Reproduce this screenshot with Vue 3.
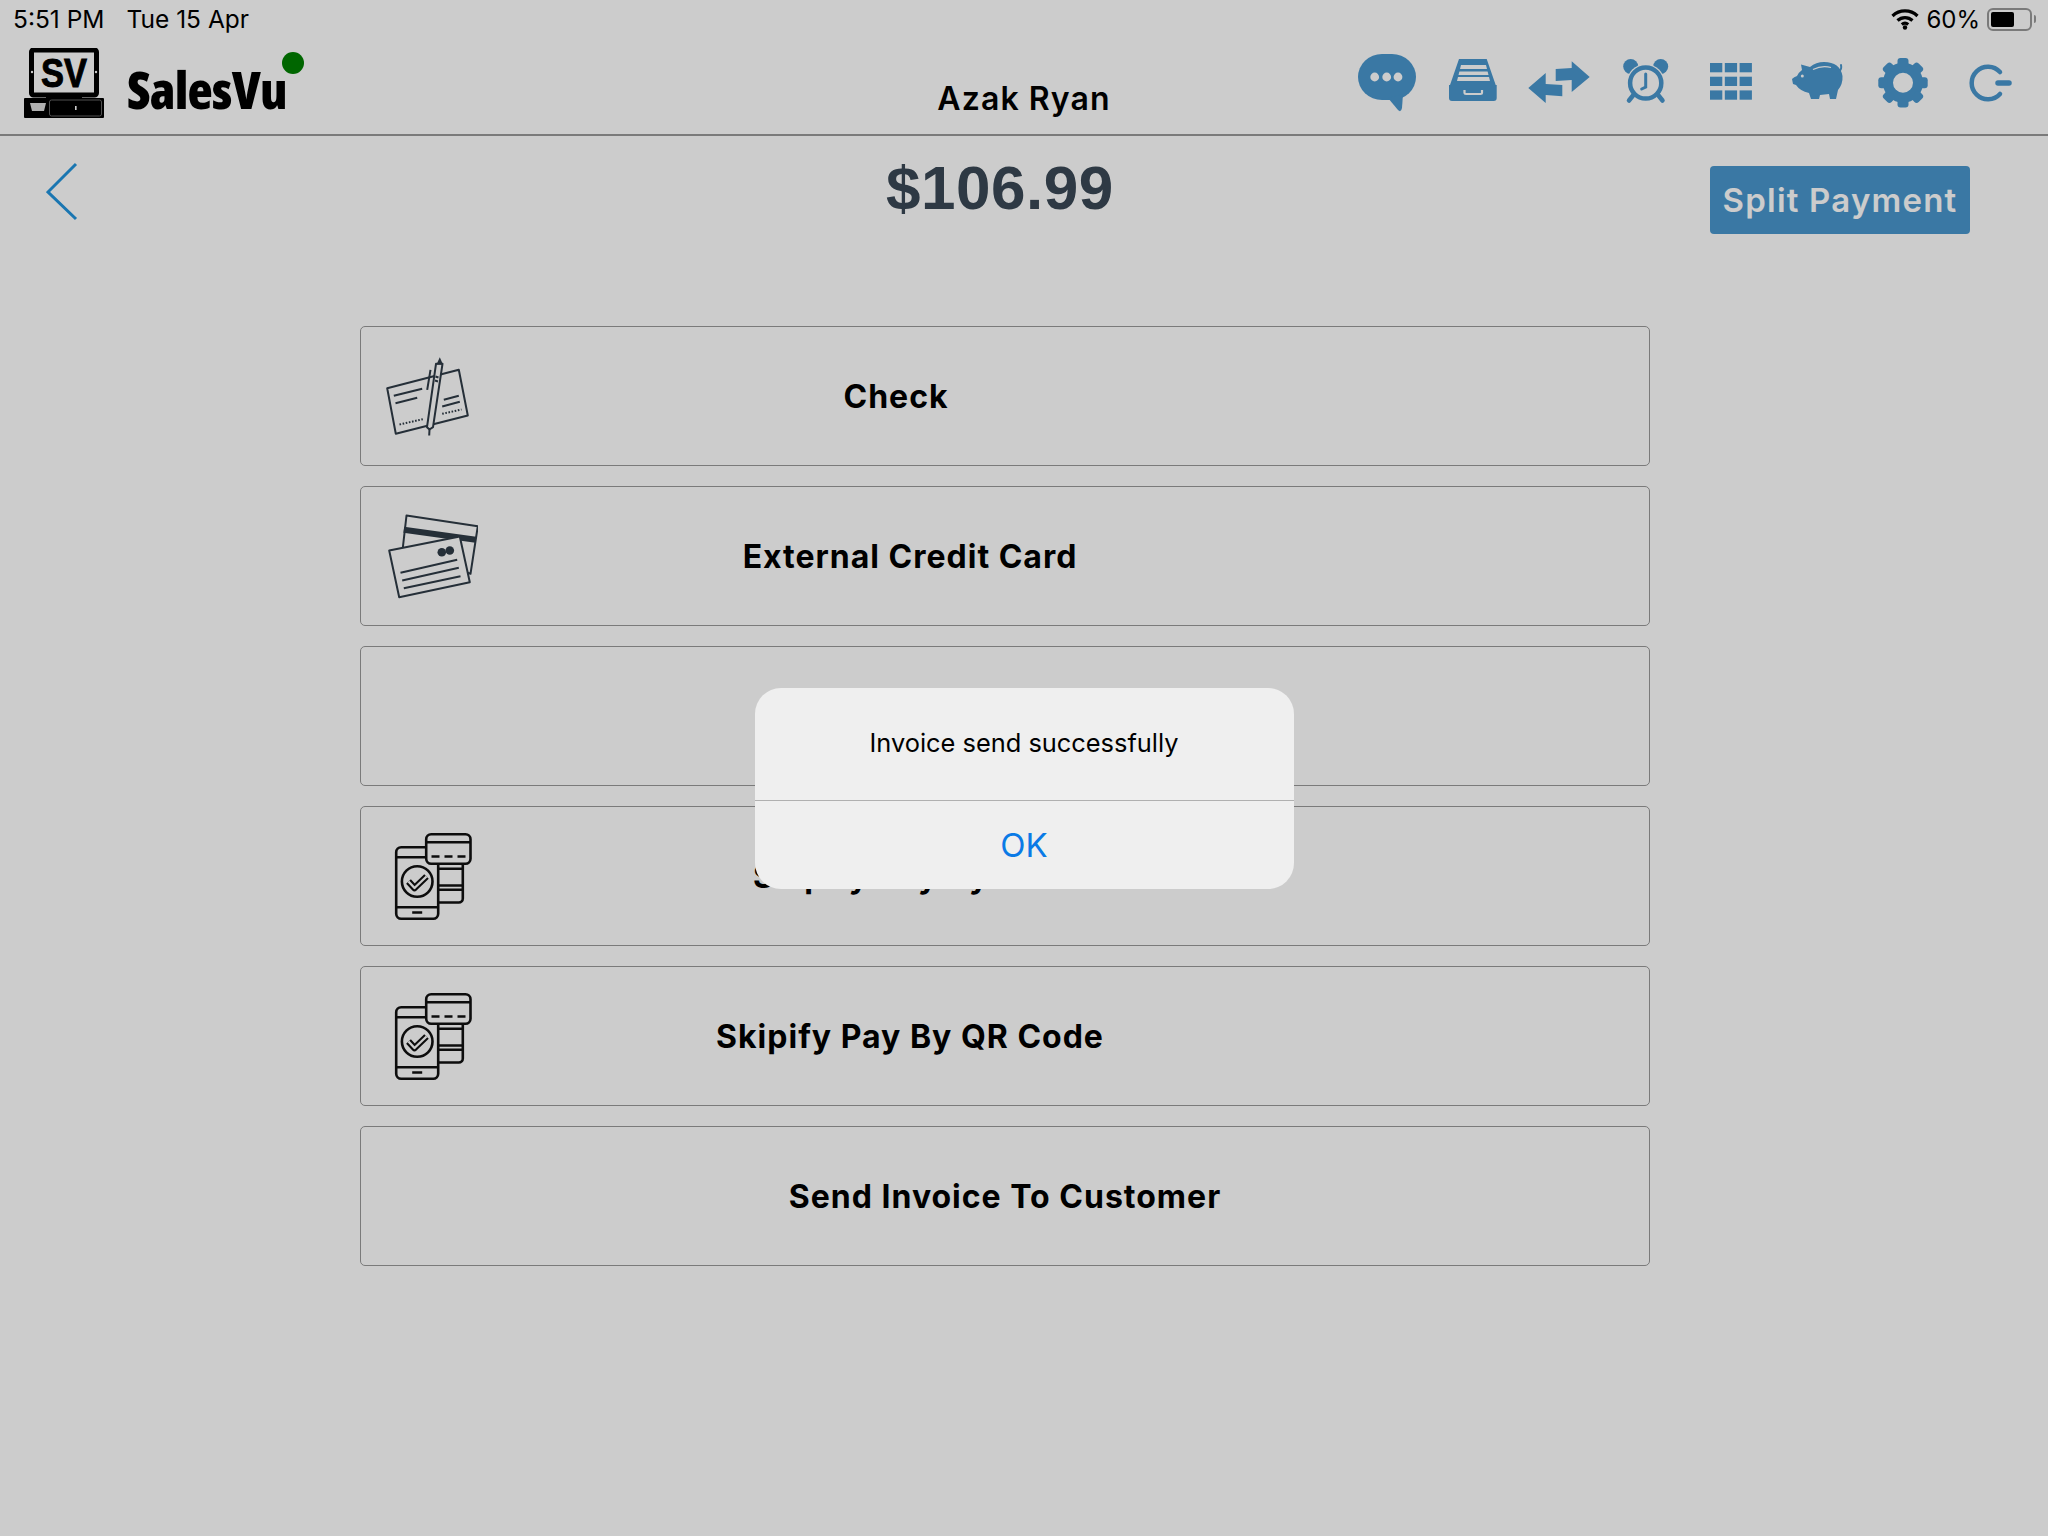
<template>
  <div class="page">
    <div class="status-bar">
      <span class="time">5:51 PM</span>
      <span class="date">Tue 15 Apr</span>
      <span class="status-right">
        <svg class="wifi" viewBox="0 0 28 22">
          <path d="M1.5 8 A18 18 0 0 1 26.5 8" />
          <path d="M6.5 12.5 A11 11 0 0 1 21.5 12.5" />
          <path d="M10.8 16.5 A5 5 0 0 1 17.2 16.5" />
          <circle cx="14" cy="19.5" r="2.2" class="wifi-dot" />
        </svg>
        <span class="percent">60%</span>
        <span class="battery"><span class="battery-fill"></span></span>
        <span class="battery-nub"></span>
      </span>
    </div>

    <header class="nav">
      <div class="brand">
        <svg class="logo" viewBox="0 0 80 70">
          <rect x="7.5" y="2" width="65" height="45" rx="2" class="logo-screen" />
          <circle cx="8" cy="24" r="1.2" class="logo-dot" />
          <circle cx="72" cy="24" r="1.2" class="logo-dot" />
          <text x="40" y="39" text-anchor="middle" textLength="46" lengthAdjust="spacingAndGlyphs" class="logo-text">SV</text>
          <rect x="22" y="47" width="36" height="3" />
          <rect x="0" y="50" width="80" height="20" rx="1" />
          <path d="M6 55 H22 L20 63 H8 Z" class="logo-receipt" />
          <rect x="25.5" y="52" width="52" height="16" rx="2" class="logo-drawer" />
          <rect x="51" y="58" width="1.6" height="4" class="logo-dot" />
        </svg>
        <span class="brand-name">SalesVu</span>
        <span class="online-dot"></span>
      </div>
      <div class="user-name">Azak Ryan</div>
      <div class="nav-icons">
        <svg viewBox="0 0 86 70">
          <rect x="14" y="6" width="58" height="46" rx="24" ry="23" />
          <path d="M44 50 L54 62 Q57 65 58 60 L59 46 Z" />
          <circle cx="30.7" cy="29" r="4.4" class="cut" />
          <circle cx="42.7" cy="29" r="4.4" class="cut" />
          <circle cx="54" cy="29" r="4.4" class="cut" />
        </svg>
        <svg viewBox="0 0 86 70">
          <path d="M29 11 H56.7 L65.7 37 H66.7 V50 Q66.7 53 63.7 53 H22 Q19 53 19 50 V37 H20 Z" />
          <path d="M31 17 H56 L60 33 H27 Z" class="cut" />
          <rect x="29" y="21" width="29" height="2.5" />
          <rect x="28" y="27" width="31" height="2" />
          <path d="M34.5 42 V45 Q34.5 46 36 46 H50.5 Q52 46 52 45 V42" class="cut-line" />
        </svg>
        <svg viewBox="0 0 86 70">
          <path d="M73.7 29 L55.7 13.3 V20 L39.7 21 V33 L55.7 32 V44 Z" />
          <path d="M12.3 40 L29.7 25 V36 L46.3 37 V48.3 L29.7 47 V55 Z" />
        </svg>
        <svg viewBox="0 0 86 70">
          <circle cx="28.7" cy="18.5" r="7.5" />
          <circle cx="58.7" cy="18.5" r="7.5" />
          <circle cx="43.7" cy="35" r="19" class="cut" />
          <circle cx="43.7" cy="35" r="15.6" class="line" />
          <path d="M43.7 26 V39 L39.7 41" class="thin" />
          <path d="M31 47.5 L27 52.5 M56.5 47.5 L60.5 52.5" class="line" />
        </svg>
        <svg viewBox="0 0 86 70">
          <rect v-for="c in gridCells" :key="c.key" :x="c.x" :y="c.y" width="12.3" height="9.3" />
        </svg>
        <svg viewBox="0 0 86 70">
          <path d="M18 31 Q20 29 23 28 Q24 25 28 22 L27 16.5 L36 19 Q42 14 50 14 Q66 14 68.5 28 Q69 36 64 42 L62 51 L56 51 L55 46 L46 47 L45 51 L37 51 L35 45 Q26 43 22 37 L19 36 Z" />
          <path d="M65 23 Q68 22 67 17" class="thin-s" />
          <circle cx="28.3" cy="28" r="1.5" class="cut" />
          <path d="M39 21.5 Q48 17 57 19.5" class="cut-slot" />
        </svg>
        <svg viewBox="0 0 86 70">
          <circle cx="43" cy="34.7" r="15" class="gear-ring" />
          <rect
            v-for="a in gearTeeth"
            :key="a"
            x="37.5"
            y="10"
            width="11"
            height="9"
            rx="3"
            :transform="`rotate(${a} 43 34.7)`"
          />
        </svg>
        <svg viewBox="0 0 86 70">
          <path d="M54 24 A16.3 16.3 0 1 0 54 46" class="line" />
          <path d="M52 35 H63" class="bar" />
        </svg>
      </div>
    </header>

    <section class="total-row">
      <svg class="back" viewBox="0 0 32 60">
        <path d="M30 2 L2 30 L30 57" />
      </svg>
      <div class="amount">$106.99</div>
      <button type="button" class="split-btn">Split Payment</button>
    </section>

    <div class="methods">
      <div class="method">
        <svg class="method-icon check-icon" viewBox="0.5 1.5 117 137">
          <path d="M26.7 61.7 L98.3 43.3 L107.3 89 L35.3 107.3 Z" />
          <path d="M33.3 69.3 L61.7 62.3 M35 76.7 L56.7 71.3 M83.3 73.3 L98.3 69.3 M81.7 80 L99.3 75.3" />
          <path d="M39 98 L62.3 92.7 M81.7 87.3 L101 83" class="dots" />
          <path d="M75.5 37.3 L82 37.3 L72.5 100.7 L69 103 L66.5 100.7 Z" class="pen" />
          <path d="M76 38 L79.3 30.7 L82.5 38 Z" class="pen-tip" />
          <path d="M70 43.3 L66.7 63.3 M69 103 L68.7 109 M75 50 L78 51 M74.5 54 L77.5 55" />
        </svg>
        <span class="label label-check">Check</span>
      </div>
      <div class="method">
        <svg class="method-icon check-icon" viewBox="0.5 1.5 117 137">
          <path d="M46 29 L117.3 39.7 L110 87.3 L42 64 Z" />
          <path d="M43.3 43.3 L115.3 53.3" class="band" />
          <path d="M28.7 64 L99.3 50 L109.3 95.7 L38.7 110.7 Z" class="pen" />
          <circle cx="81.3" cy="65.7" r="4.3" class="solid" />
          <circle cx="89.3" cy="64" r="4.3" class="solid" />
          <path d="M40 86.3 L96.7 73.3 M41.7 94 L98.3 81.3 M43.3 101.7 L100 89.7" />
        </svg>
        <span class="label">External Credit Card</span>
      </div>
      <div class="method"></div>
      <div class="method" v-for="label in skipifyRows" :key="label">
        <svg class="method-icon phone-icon" viewBox="0.5 1.5 117 137">
          <rect x="60" y="45" width="42.3" height="51" rx="4" />
          <path d="M77 62.3 H102 M77 79 H102 M77 83.3 H102" />
          <rect x="35.7" y="40.7" width="42" height="71.6" rx="5" />
          <path d="M35.7 50.7 H66 M35.7 100.7 H77.7 M51.7 106 H61.7" />
          <circle cx="56.7" cy="75" r="15.3" />
          <path d="M48 75 L54 81.5 L66 70" class="tick" />
          <path d="M48 75 L54 81.5 L66 70" class="tick-in" />
          <rect x="65.7" y="27.7" width="44.3" height="29.6" rx="5" />
          <path d="M65.7 35.7 H110 M71 50 H79 M84 50 H92 M97 50 H105" />
        </svg>
        <span class="label">{{ label }}</span>
      </div>
      <div class="method">
        <span class="label label-full">Send Invoice To Customer</span>
      </div>
    </div>

    <div class="overlay">
      <div class="alert">
        <div class="alert-message">Invoice send successfully</div>
        <button type="button" class="alert-ok">OK</button>
      </div>
    </div>
  </div>
</template>

<script setup>
const skipifyRows = ['Skipify Pay By Link', 'Skipify Pay By QR Code']

const gearTeeth = [0, 45, 90, 135, 180, 225, 270, 315]

const gridCells = []
for (let row = 0; row < 3; row++) {
  for (let col = 0; col < 3; col++) {
    gridCells.push({ key: `${row}-${col}`, x: 22 + col * 14.8, y: 15 + row * 13.7 })
  }
}
</script>

<style>
html,
body {
  margin: 0;
  background: #fff;
}
</style>

<style scoped>
.page {
  min-height: 100vh;
  background: #fff;
  color: #000;
  font-family: Inter, "Liberation Sans", sans-serif;
}

.status-bar {
  height: 38px;
  display: flex;
  align-items: center;
  padding: 0 12px 0 13px;
  font-size: 24.5px;
  box-sizing: border-box;
}

.date {
  margin-left: 22px;
}

.status-right {
  margin-left: auto;
  display: flex;
  align-items: center;
}

.wifi {
  width: 28px;
  height: 22px;
  fill: none;
  stroke: #000;
  stroke-width: 3.2;
}

.wifi-dot {
  fill: #000;
  stroke: none;
}

.percent {
  margin-left: 7px;
  font-size: 24px;
}

.battery {
  width: 45px;
  height: 23px;
  margin-left: 7px;
  box-sizing: border-box;
  border: 2px solid #999;
  border-radius: 6px;
  padding: 2px;
  display: block;
}

.battery-fill {
  display: block;
  width: 23px;
  height: 100%;
  background: #000;
  border-radius: 2px;
}

.battery-nub {
  width: 2px;
  height: 8px;
  margin-left: 2px;
  background: #999;
  border-radius: 0 2px 2px 0;
}

.nav {
  height: 98px;
  box-sizing: border-box;
  border-bottom: 2px solid #999;
  display: grid;
  grid-template-columns: 1fr auto 1fr;
}

.brand {
  position: relative;
  display: flex;
  padding: 10px 0 0 24px;
}

.logo {
  width: 80px;
  height: 70px;
  fill: #000;
}

.logo-screen {
  fill: none;
  stroke: #000;
  stroke-width: 5;
}

.logo-dot {
  fill: #fff;
}

.logo-text {
  font-family: "Liberation Sans", sans-serif;
  font-weight: 700;
  font-size: 41px;
  fill: #000;
  stroke: #000;
  stroke-width: 1;
}

.logo-receipt {
  fill: #ddd;
}

.logo-drawer {
  fill: #000;
  stroke: #666;
  stroke-width: 1;
}

.brand-name {
  margin: 16px 0 0 23px;
  font-family: "Open Sans", sans-serif;
  font-stretch: 75%;
  font-weight: 800;
  font-size: 52px;
  line-height: 50px;
  letter-spacing: -0.8px;
}

.online-dot {
  position: absolute;
  left: 282px;
  top: 14px;
  width: 22px;
  height: 22px;
  border-radius: 50%;
  background: #008000;
}

.user-name {
  align-self: end;
  padding-bottom: 16px;
  font-size: 32px;
  font-weight: 600;
  line-height: 38px;
  letter-spacing: 1.1px;
}

.nav-icons {
  display: flex;
  justify-content: flex-end;
  padding: 10px 16px 0 0;
}

.nav-icons svg {
  width: 86px;
  height: 70px;
  fill: #4997ce;
  stroke: none;
}

.nav-icons .cut {
  fill: #fff;
}

.nav-icons .cut-line {
  fill: none;
  stroke: #fff;
  stroke-width: 2.2;
}

.nav-icons .cut-slot {
  fill: none;
  stroke: #fff;
  stroke-width: 1.2;
}

.nav-icons .line {
  fill: none;
  stroke: #4997ce;
  stroke-width: 4.5;
  stroke-linecap: round;
}

.nav-icons .thin {
  fill: none;
  stroke: #4997ce;
  stroke-width: 3;
  stroke-linecap: round;
}

.nav-icons .thin-s {
  fill: none;
  stroke: #4997ce;
  stroke-width: 2;
  stroke-linecap: round;
}

.nav-icons .bar {
  fill: none;
  stroke: #4997ce;
  stroke-width: 5.5;
  stroke-linecap: round;
}

.nav-icons .gear-ring {
  fill: none;
  stroke: #4997ce;
  stroke-width: 10;
}

.total-row {
  height: 190px;
  box-sizing: border-box;
  padding: 24px 78px 0 46px;
  display: grid;
  grid-template-columns: 840px 226px 1fr;
  align-items: start;
}

.back {
  width: 32px;
  height: 60px;
  margin-top: 2px;
  fill: none;
  stroke: #2194de;
  stroke-width: 3;
}

.amount {
  font-family: "Liberation Sans", sans-serif;
  font-size: 62px;
  font-weight: 700;
  line-height: 56px;
  letter-spacing: 0.5px;
  text-align: center;
  color: #3a4855;
  white-space: nowrap;
}

.split-btn {
  justify-self: end;
  width: 260px;
  height: 68px;
  margin-top: 6px;
  padding: 0;
  border: none;
  border-radius: 4px;
  background: #4997ce;
  color: #fff;
  font-family: inherit;
  font-size: 33px;
  font-weight: 600;
  letter-spacing: 1.2px;
}

.methods {
  width: 1290px;
  margin-left: 360px;
  display: flex;
  flex-direction: column;
  gap: 20px;
}

.method {
  height: 140px;
  box-sizing: border-box;
  border: 1.5px solid #999;
  border-radius: 5px;
  display: flex;
  align-items: center;
}

.method-icon {
  width: 117px;
  height: 137px;
  flex: none;
  fill: none;
  stroke-linejoin: round;
}

.check-icon {
  stroke: #2f3b47;
  stroke-width: 2;
}

.check-icon .dots {
  stroke-dasharray: 1.6 1.6;
  stroke-width: 2;
}

.check-icon .pen {
  fill: #fff;
}

.check-icon .pen-tip,
.check-icon .solid {
  fill: #2f3b47;
  stroke: none;
}

.check-icon .band {
  stroke-width: 6;
}

.phone-icon {
  stroke: #111;
  stroke-width: 2.6;
}

.phone-icon rect {
  fill: #fff;
}

.phone-icon circle {
  fill: #fff;
}

.phone-icon .tick {
  stroke-width: 6.5;
}

.phone-icon .tick-in {
  stroke: #fff;
  stroke-width: 2.4;
}

.label {
  width: 864px;
  text-align: center;
  font-size: 32px;
  font-weight: 700;
  letter-spacing: 1px;
  color: #000;
}

.label-check {
  width: 836px;
}

.label-full {
  width: 100%;
}

.overlay {
  position: fixed;
  inset: 0;
  display: flex;
  justify-content: center;
  align-items: flex-start;
  background: rgba(0, 0, 0, 0.2);
}

.alert {
  width: 539px;
  height: 201px;
  margin-top: 688px;
  background: #efefef;
  border-radius: 26px;
  display: flex;
  flex-direction: column;
}

.alert-message {
  height: 113px;
  box-sizing: border-box;
  border-bottom: 1px solid #b0b0b0;
  padding-top: 39px;
  text-align: center;
  font-size: 25.4px;
  line-height: 32px;
}

.alert-ok {
  flex: 1;
  padding: 0;
  border: none;
  background: none;
  color: #0a7ae6;
  font-family: inherit;
  font-size: 33px;
}
</style>
